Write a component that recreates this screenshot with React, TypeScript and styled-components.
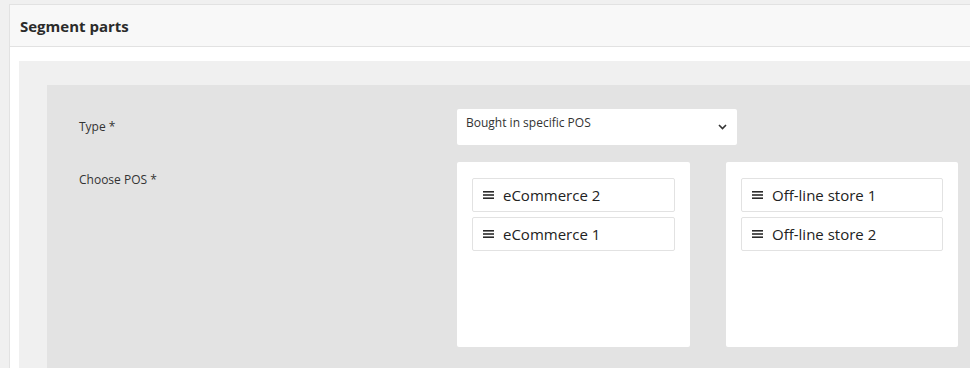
import React from "react";
import styled, { createGlobalStyle } from "styled-components";

const Global = createGlobalStyle`
  html, body { margin: 0; padding: 0; }
  body {
    background: #f0f0f0;
    font-family: "Open Sans", "Noto Sans", sans-serif;
    color: #333;
    overflow: hidden;
    width: 970px;
    height: 368px;
  }
`;

const Page = styled.div`
  padding: 4px 0 0 9px;
  width: 1100px;
  height: 364px;
  overflow: hidden;
`;

const Panel = styled.section`
  background: #fff;
  border: 1px solid #e2e2e2;
  border-right: none;
`;

const Header = styled.div`
  height: 41px;
  display: flex;
  align-items: center;
  padding: 0 10px;
  background: #f8f8f8;
  border-bottom: 1px solid #e2e2e2;
  font-size: 15px;
  font-weight: 700;
  color: #2b2b2b;
`;

const Body = styled.div`
  padding: 14px 0 0 9px;
`;

const Section = styled.div`
  background: #f0f0f0;
  padding: 24px 0 0 28px;
`;

const Inner = styled.div`
  background: #e3e3e3;
  padding: 24px 0 40px 32px;
  display: grid;
  grid-template-columns: 378px 1fr;
  row-gap: 17px;
`;

const Label = styled.div<{ $top: number }>`
  font-size: 12px;
  color: #333;
  padding-top: ${(p) => p.$top}px;
  line-height: 16px;
`;

const Select = styled.div`
  width: 280px;
  height: 36px;
  box-sizing: border-box;
  background: #fff;
  border-radius: 2px;
  display: flex;
  justify-content: space-between;
  padding: 6px 10px 0 9px;
  font-size: 12px;
  line-height: 16px;
  color: #333;
`;

const Chevron = styled.svg`
  margin-top: 9px;
`;

const Lists = styled.div`
  display: flex;
  gap: 36px;
`;

const ListBox = styled.div<{ $w: number }>`
  width: ${(p) => p.$w}px;
  height: 185px;
  box-sizing: border-box;
  background: #fff;
  border-radius: 2px;
  padding: 16px 15px;
  display: flex;
  flex-direction: column;
  gap: 5px;
`;

const Item = styled.div`
  height: 34px;
  box-sizing: border-box;
  border: 1px solid #e2e2e2;
  border-radius: 2px;
  display: flex;
  align-items: center;
  gap: 9px;
  padding-left: 10px;
  font-size: 15px;
  font-weight: 500;
  color: #222;
`;

const Handle = () => (
  <svg width="11" height="8" viewBox="0 0 11 8">
    <g stroke="#2a2a2a" strokeWidth="1.6">
      <line x1="0" y1="0.8" x2="11" y2="0.8" />
      <line x1="0" y1="4" x2="11" y2="4" />
      <line x1="0" y1="7.2" x2="11" y2="7.2" />
    </g>
  </svg>
);

const lists = [
  { w: 233, items: ["eCommerce 2", "eCommerce 1"] },
  { w: 232, items: ["Off-line store 1", "Off-line store 2"] },
];

export default function App() {
  return (
    <>
      <Global />
      <Page>
        <Panel>
          <Header>Segment parts</Header>
          <Body>
            <Section>
              <Inner>
                <Label $top={10}>Type *</Label>
                <Select>
                  <span>Bought in specific POS</span>
                  <Chevron width="9" height="6" viewBox="0 0 9 6">
                    <path d="M1 1 L4.5 4.5 L8 1" fill="none" stroke="#333" strokeWidth="1.6" />
                  </Chevron>
                </Select>
                <Label $top={10}>Choose POS *</Label>
                <Lists>
                  {lists.map((l, i) => (
                    <ListBox key={i} $w={l.w}>
                      {l.items.map((t) => (
                        <Item key={t}>
                          <Handle />
                          <span>{t}</span>
                        </Item>
                      ))}
                    </ListBox>
                  ))}
                </Lists>
              </Inner>
            </Section>
          </Body>
        </Panel>
      </Page>
    </>
  );
}
